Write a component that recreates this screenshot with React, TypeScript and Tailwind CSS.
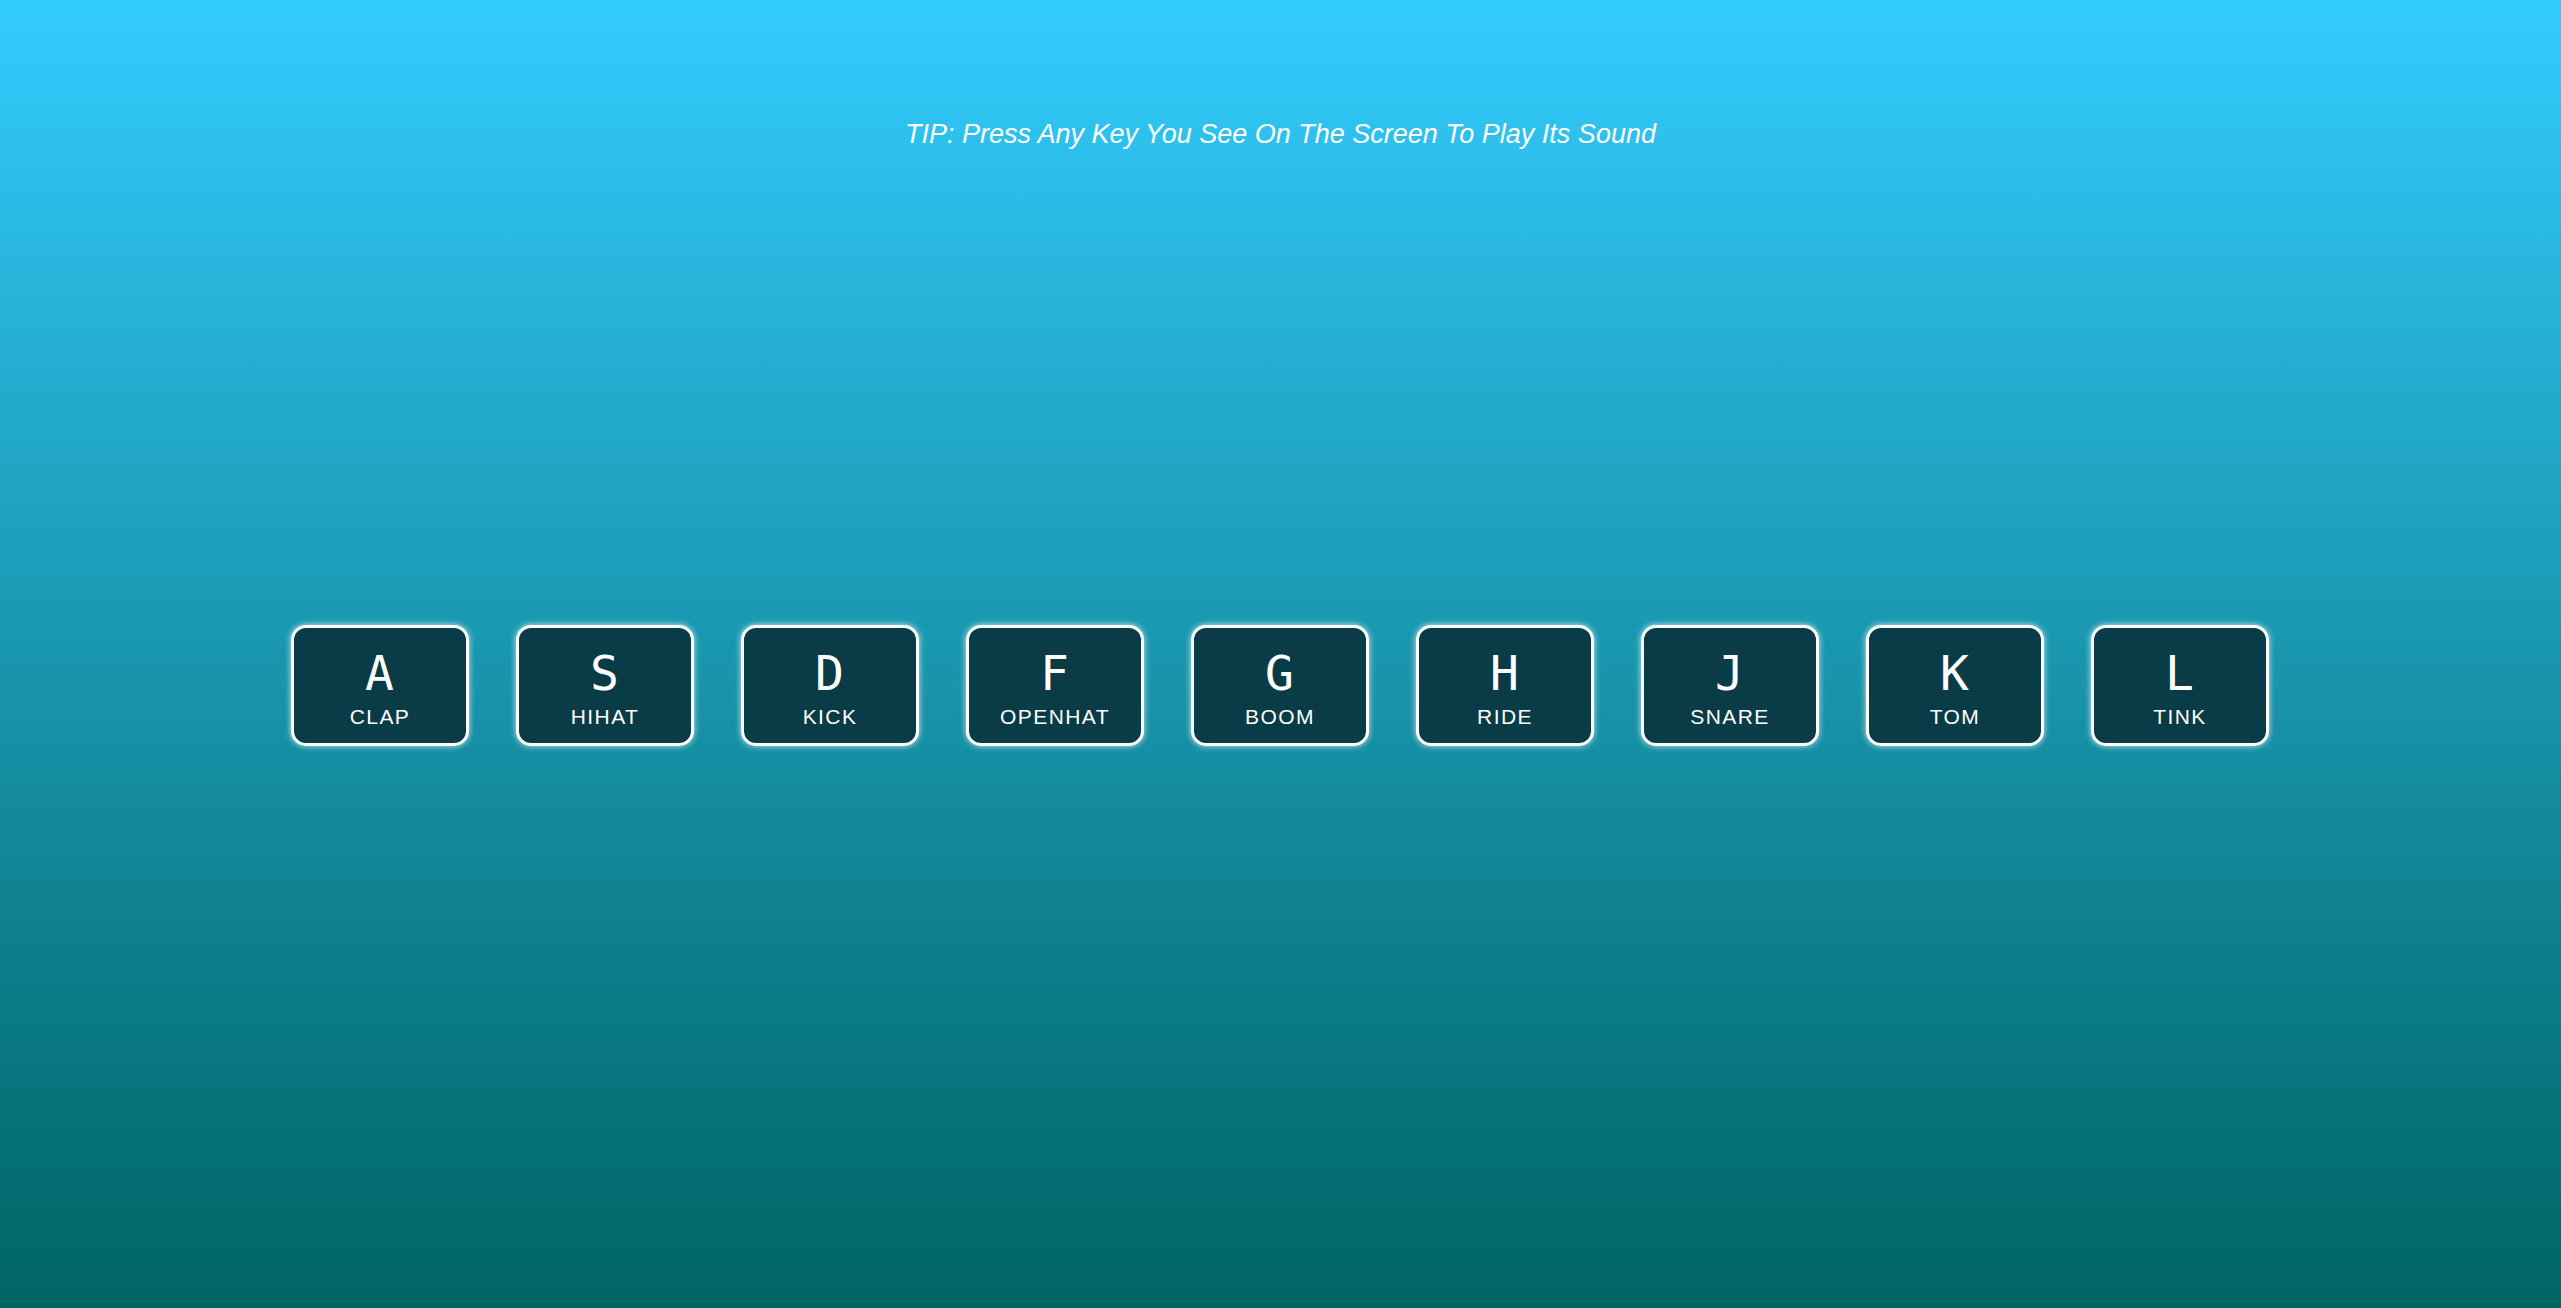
const keys = [
  { key: 'A', sound: 'clap' },
  { key: 'S', sound: 'hihat' },
  { key: 'D', sound: 'kick' },
  { key: 'F', sound: 'openhat' },
  { key: 'G', sound: 'boom' },
  { key: 'H', sound: 'ride' },
  { key: 'J', sound: 'snare' },
  { key: 'K', sound: 'tom' },
  { key: 'L', sound: 'tink' },
]

export default function App() {
  return (
    <div className="min-h-screen bg-gradient-to-b from-[#33ccff] to-[#006464] font-['Liberation_Sans',Arial,sans-serif] text-white">
      <p className="pt-[118px] text-center text-[27px] italic leading-[32px]">
        TIP: Press Any Key You See On The Screen To Play Its Sound
      </p>

      <div className="mt-[475px] flex justify-center gap-[47px] pr-[2px]">
        {keys.map((item) => (
          <div
            key={item.key}
            className="flex h-[121px] w-[178px] flex-col items-center rounded-[15px] border-[3px] border-white bg-[#0a3c48] pt-[21px] shadow-[0_0_6px_rgba(255,255,255,0.8)]"
          >
            <kbd className="block font-['DejaVu_Sans_Mono',monospace] text-[48px] leading-[49px]">{item.key}</kbd>
            <span className="mt-[7px] pl-[1px] text-[21px] uppercase leading-[24px] tracking-[1.4px]">{item.sound}</span>
          </div>
        ))}
      </div>
    </div>
  )
}
